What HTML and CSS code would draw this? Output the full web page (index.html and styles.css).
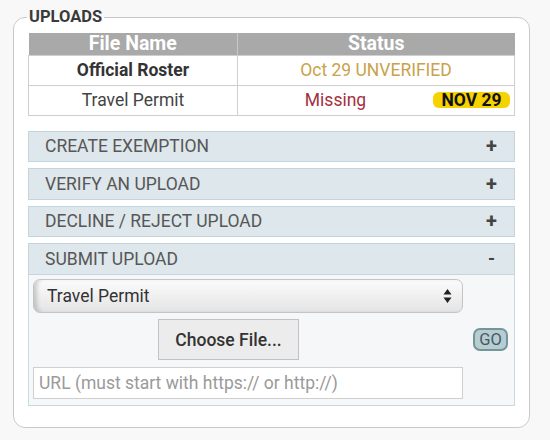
FILE: index.html
```html
<!DOCTYPE html>
<html>
<head>
<meta charset="utf-8">
<link rel="stylesheet" href="styles.css">
</head>
<body>
<fieldset class="box">
  <legend class="box-title">UPLOADS</legend>
  <table class="files">
    <thead>
      <tr><th class="col-name">File Name</th><th>Status</th></tr>
    </thead>
    <tbody>
      <tr>
        <td class="name strong">Official Roster</td>
        <td class="status unverified">Oct 29 UNVERIFIED</td>
      </tr>
      <tr>
        <td class="name">Travel Permit</td>
        <td class="status">
          <div class="status-row"><span class="missing">Missing</span><span class="badge">NOV 29</span></div>
        </td>
      </tr>
    </tbody>
  </table>

  <div class="accordion">
    <div class="acc-head"><span>CREATE EXEMPTION</span><span class="acc-sign">+</span></div>
    <div class="acc-head"><span>VERIFY AN UPLOAD</span><span class="acc-sign">+</span></div>
    <div class="acc-head"><span>DECLINE / REJECT UPLOAD</span><span class="acc-sign">+</span></div>
    <div class="acc-group">
      <div class="acc-head open"><span>SUBMIT UPLOAD</span><span class="acc-sign minus">-</span></div>
      <div class="acc-body">
        <div class="select">
          <span>Travel Permit</span>
          <svg class="select-arrows" width="9" height="16" viewBox="0 0 9 16"><path d="M4.5 1 L8.5 6.5 H0.5 Z M4.5 15 L8.5 9.5 H0.5 Z" fill="#222"/></svg>
        </div>
        <div class="file-row">
          <button class="choose">Choose File...</button>
          <button class="go">GO</button>
        </div>
        <div class="url">URL (must start with https:// or http://)</div>
      </div>
    </div>
  </div>
</fieldset>
</body>
</html>
```
FILE: styles.css
```css
* { box-sizing: border-box; }
html, body { margin: 0; }
body {
  width: 550px;
  height: 440px;
  padding: 8px 20px 0 13px;
  background: #f8f8f8;
  font-family: Roboto, "Liberation Sans", sans-serif;
  color: #333;
}
.box {
  margin: 0;
  border: 1px solid #c9c9c9;
  border-radius: 12px;
  padding: 7px 14px 21px 14px;
  background: #fff;
  min-width: 0;
}
.box-title {
  font-size: 16.5px;
  font-weight: 700;
  color: #3a3a3a;
  padding: 0 2px;
  margin-left: -1px;
  line-height: 18px;
}
.files {
  width: 100%;
  border-collapse: collapse;
  font-size: 17.5px;
}
.files th {
  background: #a9a9a9;
  color: #fff;
  font-weight: 700;
  font-size: 19.5px;
  height: 22px;
  padding: 0;
  line-height: 20px;
  border-left: 1px solid #c8c8c8;
}
.files th.col-name { width: 209px; border-left: none; }
.files td {
  height: 30px;
  border: 1px solid #cfcfcf;
  text-align: center;
  padding: 0;
}
.name { color: #444; }
.name.strong { font-weight: 700; color: #333; }
.unverified { color: #c9a24b; }
.status-row {
  display: flex;
  align-items: center;
  padding-right: 4px;
}
.missing { flex: 1; text-align: center; color: #a3303f; }
.badge {
  background: #f6d200;
  color: #111;
  font-weight: 700;
  font-size: 17.5px;
  border-radius: 6px;
  line-height: 16px;
  height: 16px;
  width: 77px;
  text-align: center;
}
.accordion {
  margin-top: 15px;
  display: flex;
  flex-direction: column;
  gap: 6px;
}
.acc-head {
  display: flex;
  justify-content: space-between;
  align-items: center;
  height: 31.5px;
  padding: 0 17px 0 16px;
  background: #dee7eb;
  border: 1px solid #c4d5dc;
  color: #575757;
  font-size: 17.5px;
}
.acc-sign { font-size: 20px; font-weight: 700; color: #444; }
.acc-sign.minus { font-size: 18px; padding-right: 2px; }
.acc-body {
  height: 131px;
  background: #f5f7f8;
  border: 1px solid #c9dbe2;
  border-top: none;
  padding: 4px 51px 0 4px;
  display: flex;
  flex-direction: column;
}
.select {
  height: 34px;
  border: 1px solid #c4c4c4;
  border-radius: 7px;
  background: linear-gradient(to bottom, #fbfbfb 0%, #f0f0f0 50%, #e4e4e4 100%);
  box-shadow: inset 5px 0 4px -2px rgba(0,0,0,0.18);
  display: flex;
  align-items: center;
  justify-content: space-between;
  padding: 0 10px 0 13px;
  font-size: 17.5px;
  color: #333;
}
.file-row {
  display: flex;
  align-items: center;
  margin-top: 6px;
  height: 42px;
}
.choose {
  margin-left: 125px;
  width: 141px;
  height: 41px;
  background: #ececec;
  border: 1px solid #c2c2c2;
  font-family: inherit;
  font-size: 17.5px;
  font-weight: 500;
  color: #333;
  padding: 0;
}
.go {
  margin-left: auto;
  margin-right: -45px;
  width: 35px;
  height: 23px;
  background: #b7cdd4;
  border: 2px solid #759599;
  border-radius: 7px;
  font-family: inherit;
  font-size: 16.5px;
  line-height: 18px;
  color: #485a60;
  padding: 0;
}
.url {
  margin-top: 6px;
  height: 32px;
  background: #fff;
  border: 1px solid #cfcfcf;
  display: flex;
  align-items: center;
  padding-left: 5px;
  font-size: 17.5px;
  color: #9a9a9a;
}
```
